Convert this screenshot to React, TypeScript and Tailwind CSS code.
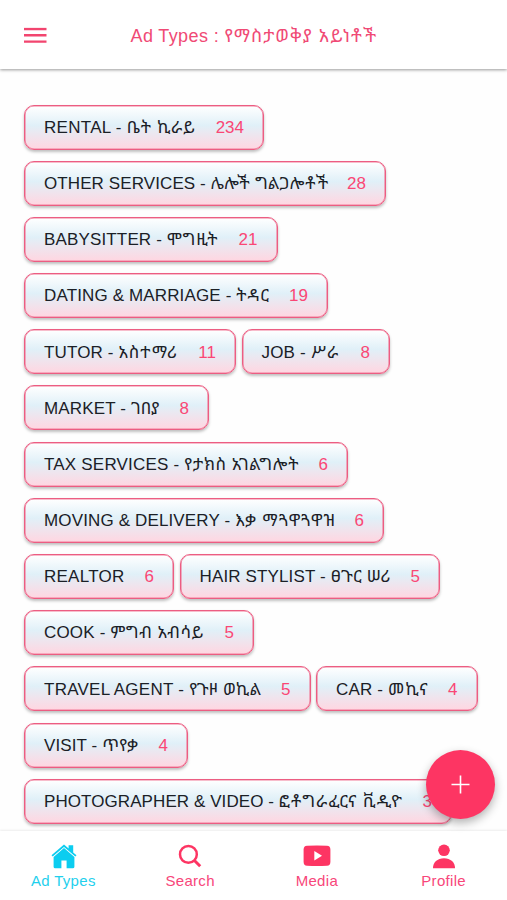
const PINK = '#fd3563';

// enTrack / amTrack: letter spacing in pixels of the Latin and the Ethiopic part.
type Ad = { en: string; am?: string; count: string; width: number; enTrack: number; amTrack?: number };

const rows: Ad[][] = [
  [{ en: 'RENTAL', am: 'ቤት ኪራይ', count: '234', width: 240, enTrack: 0.28, amTrack: 0.75 }],
  [{ en: 'OTHER SERVICES', am: 'ሌሎች ግልጋሎቶች', count: '28', width: 362, enTrack: 0.1, amTrack: 0.3 }],
  [{ en: 'BABYSITTER', am: 'ሞግዚት', count: '21', width: 253.5, enTrack: 0.15, amTrack: 0.9 }],
  [{ en: 'DATING & MARRIAGE', am: 'ትዳር', count: '19', width: 304, enTrack: 0.14, amTrack: 0.9 }],
  [
    { en: 'TUTOR', am: 'አስተማሪ', count: '11', width: 212, enTrack: 0.15, amTrack: 1 },
    { en: 'JOB', am: 'ሥራ', count: '8', width: 148.5, enTrack: 0.2, amTrack: 3 },
  ],
  [{ en: 'MARKET', am: 'ገበያ', count: '8', width: 185, enTrack: 0.15, amTrack: 0 }],
  [{ en: 'TAX SERVICES', am: 'የታክስ አገልግሎት', count: '6', width: 324, enTrack: 0.2, amTrack: 0.55 }],
  [{ en: 'MOVING & DELIVERY', am: 'እቃ ማጓዋጓዋዝ', count: '6', width: 360, enTrack: 0.14, amTrack: 0.8 }],
  [
    { en: 'REALTOR', count: '6', width: 150, enTrack: 0.25 },
    { en: 'HAIR STYLIST', am: 'ፀጉር ሠሪ', count: '5', width: 260.5, enTrack: 0.14, amTrack: 0.15 },
  ],
  [{ en: 'COOK', am: 'ምግብ አብሳይ', count: '5', width: 230, enTrack: 0.18, amTrack: 0.55 }],
  [
    { en: 'TRAVEL AGENT', am: 'የጉዞ ወኪል', count: '5', width: 286.5, enTrack: 0.25, amTrack: 0.1 },
    { en: 'CAR', am: 'መኪና', count: '4', width: 161.5, enTrack: 0.15, amTrack: 1.4 },
  ],
  [{ en: 'VISIT', am: 'ጥየቃ', count: '4', width: 164, enTrack: 0.1, amTrack: 0.2 }],
  [{ en: 'PHOTOGRAPHER & VIDEO', am: 'ፎቶግራፈርና ቪዲዮ', count: '3', width: 428, enTrack: 0.08, amTrack: 1 }],
];

function Chip({ ad }: { ad: Ad }) {
  return (
    <button
      className="flex h-[45px] shrink-0 items-center justify-between whitespace-nowrap rounded-[10px] border border-[#ec5d82] bg-linear-to-b from-white via-[#e0f0f8] via-45% to-[#ffd6e1] pl-[19px] pr-[19px] pt-px text-[17px] text-[#1b2026] shadow-[inset_0_0_0_0.6px_#f07c9a,0_2px_3px_rgba(0,0,0,0.25)]"
      style={{ width: ad.width }}
    >
      <span>
        <span style={{ letterSpacing: ad.enTrack }}>
          {ad.en}
          {ad.am && ' - '}
        </span>
        {ad.am && <span style={{ letterSpacing: ad.amTrack }}>{ad.am}</span>}
      </span>
      <span className="text-[#fa4775]">{ad.count}</span>
    </button>
  );
}

function HomeIcon() {
  return (
    <svg className="translate-x-px" width="26" height="25" viewBox="0 0 26 25" fill="#0bcdf0">
      <path d="M13 0.5 0.5 11.2 1.7 12.5 13 2.9 24.3 12.5 25.5 11.2 22.2 8.4V1.2H17.6V4.4Z" />
      <path d="M13 4.1 2.6 12.9V22.7Q2.6 24.3 4.2 24.3H10.4V16.5H15.6V24.3H21.8Q23.4 24.3 23.4 22.7V12.9Z" />
    </svg>
  );
}

function SearchIcon() {
  return (
    <svg width="24" height="24" viewBox="0 0 24 24" fill="none" stroke={PINK} strokeWidth="2.5">
      <circle cx="10.4" cy="10.4" r="8.4" />
      <path d="m16.2 16.2 6 6" strokeWidth="3" />
    </svg>
  );
}

function MediaIcon() {
  return (
    <svg width="28" height="22" viewBox="0 0 28 22">
      <path d="M4 .7Q14 .1 24 .7Q27.4 1 27.4 4.5V17Q27.4 20.5 24 20.7Q14 21.2 4 20.7Q.6 20.5 .6 17V4.5Q.6 1 4 .7Z" fill={PINK} />
      <path d="m11.3 6 7.7 4.7-7.7 4.7Z" fill="#fff" />
    </svg>
  );
}

function ProfileIcon() {
  return (
    <svg width="24" height="25" viewBox="0 0 24 25" fill={PINK}>
      <circle cx="12" cy="6.3" r="5.8" />
      <path d="M1 24.2C.8 18.5 5.4 14.2 12 14.2S23.2 18.5 23 24.2Z" />
    </svg>
  );
}

const tabs = [
  { label: 'Ad Types', icon: <HomeIcon />, color: 'text-[#1fd0ed]' },
  { label: 'Search', icon: <SearchIcon />, color: 'text-[#f8467a]' },
  { label: 'Media', icon: <MediaIcon />, color: 'text-[#f8467a]' },
  { label: 'Profile', icon: <ProfileIcon />, color: 'text-[#f8467a]' },
];

export default function App() {
  return (
    <div className="relative flex h-[900px] w-[507px] flex-col overflow-hidden bg-[#fefefe] font-['Liberation_Sans','Noto_Sans_Ethiopic',sans-serif]">
      <header className="z-10 flex h-[69px] shrink-0 items-center bg-white pl-6 pt-[3px] shadow-[0_1px_3px_rgba(0,0,0,0.4)]">
        <button aria-label="Menu">
          <svg className="-translate-y-[0.5px]" width="23" height="16" viewBox="0 0 23 16" stroke="#f2456f" strokeWidth="2.4">
            <path d="M0 1.5H22.5M0 7.8H22.5M0 14.1H22.5" />
          </svg>
        </button>
        <h1 className="ml-[83.5px] whitespace-nowrap text-[18px] tracking-[0.38px] text-[#f04a75]">
          Ad Types : <span className="tracking-[1.1px]">የማስታወቅያ አይነቶች</span>
        </h1>
      </header>
      <main className="flex min-h-0 flex-1 flex-col gap-[11.2px] overflow-hidden pl-6 pt-[35.5px]">
        {rows.map((row) => (
          <div key={row[0].en} className="flex shrink-0 gap-[5.5px]">
            {row.map((ad) => (
              <Chip key={ad.en} ad={ad} />
            ))}
          </div>
        ))}
      </main>
      <nav className="grid h-[69px] shrink-0 grid-cols-4 bg-white shadow-[0_-1px_2px_rgba(0,0,0,0.07)]">
        {tabs.map((tab) => (
          <a key={tab.label} className={`flex flex-col items-center pt-[12px] ${tab.color}`}>
            <span className="flex h-[26px] items-center">{tab.icon}</span>
            <span className="text-[15px] leading-[23px] tracking-[0.3px]">{tab.label}</span>
          </a>
        ))}
      </nav>
      <button
        aria-label="Add"
        className="absolute left-[426px] top-[750px] z-20 flex size-[69px] items-center justify-center rounded-full bg-[#fd3563] shadow-[0_4px_10px_rgba(0,0,0,0.3)]"
      >
        <svg width="19" height="19" viewBox="0 0 19 19" stroke="#fff" strokeWidth="1.6">
          <path d="M9.5 .5V18.5M.5 9.5H18.5" />
        </svg>
      </button>
    </div>
  );
}
